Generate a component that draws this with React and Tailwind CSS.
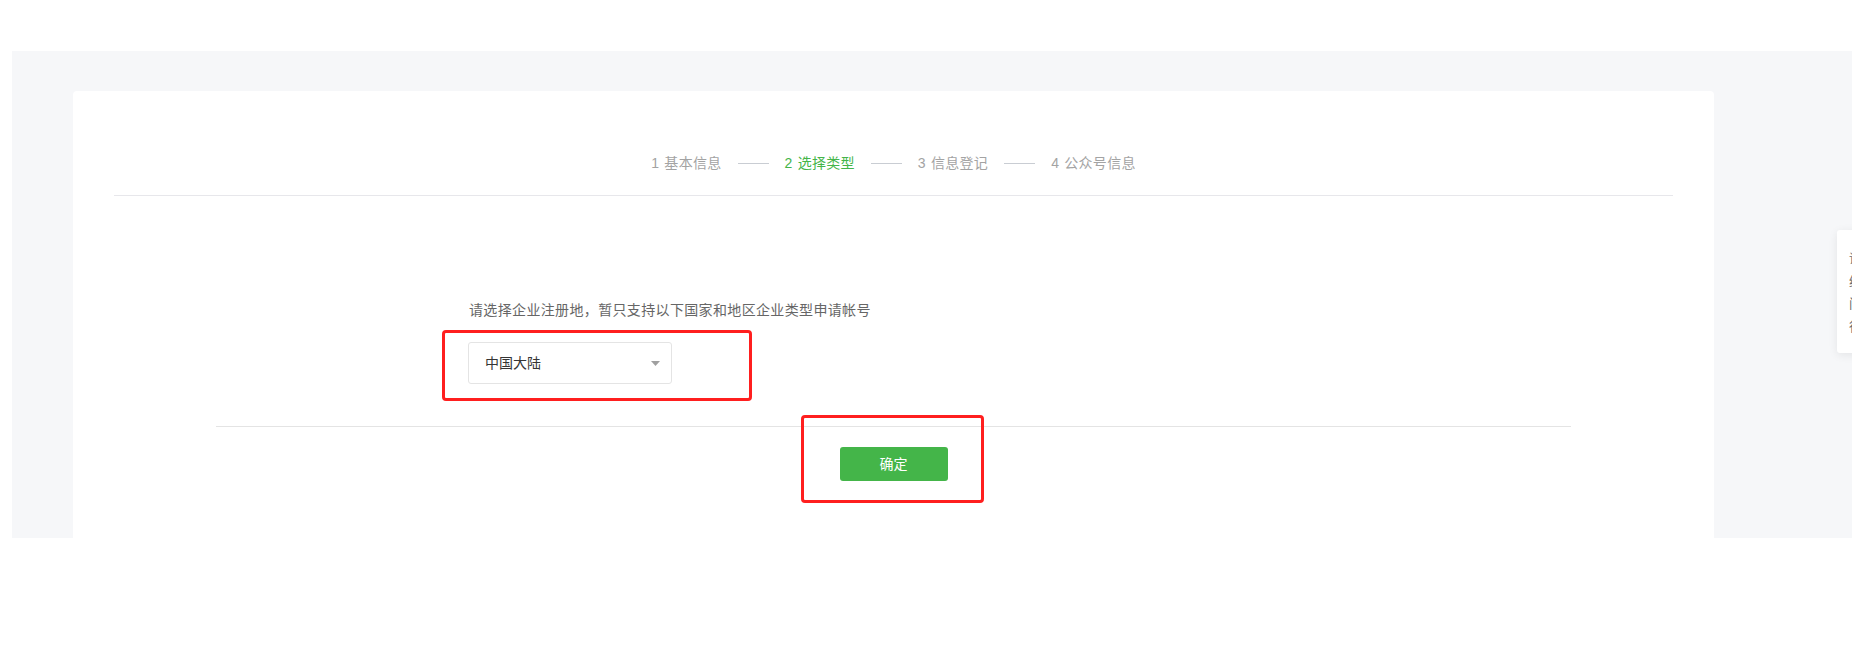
import React from 'react';

const steps = [
  { n: 1, label: '基本信息' },
  { n: 2, label: '选择类型', active: true },
  { n: 3, label: '信息登记' },
  { n: 4, label: '公众号信息' },
];

const font = { fontFamily: '"Liberation Sans", "Noto Sans CJK SC", sans-serif' };

const StepBar = () => (
  <div className="flex items-center justify-center pt-[62px] pb-[22px] border-b border-[#e7e7eb] text-[14px] leading-[20px] tracking-[0.3px]">
    {steps.map((s, i) => (
      <React.Fragment key={s.n}>
        {i > 0 && <span className="mx-[16px] w-[31px] h-px bg-[#c9cdd3]" />}
        <span className={s.active ? 'text-[#44b549]' : 'text-[#a3a3a3]'}>
          {s.n}<span className="ml-[5px]">{s.label}</span>
        </span>
      </React.Fragment>
    ))}
  </div>
);

const SideTools = () => (
  <div className="absolute left-[1825px] top-[179px] w-[60px] h-[123px] bg-white rounded-[3px] shadow-[0_2px_10px_rgba(0,0,0,0.08)] pl-[12px] pt-[18px] text-[13px] leading-[22.5px] text-[#6a6a6a]">
    <div>话</div>
    <div>络</div>
    <div>问</div>
    <div>待</div>
  </div>
);

export default function App() {
  return (
    <div className="relative min-h-[645px] bg-white pt-[51px] pl-[12px]" style={font}>
      <div className="relative w-[1840px] h-[487px] bg-[#f6f7f9] overflow-hidden pl-[61px] pt-[40px]">
        <div className="w-[1641px] h-[447px] bg-white rounded-t-[4px] px-[41px]">
          <StepBar />

          <div className="mx-[102px] border-b border-[#e4e4e4] pt-[104px] pb-[42px]">
            <div className="ml-[253px] text-[14px] leading-[20px] tracking-[0.35px] text-[#666]">
              请选择企业注册地，暂只支持以下国家和地区企业类型申请帐号
            </div>
            <div className="ml-[252px] mt-[22px] w-[204px] h-[42px] border border-[#e4e4e4] rounded-[3px] flex items-center justify-between pl-[16px] pr-[11px] text-[14px] text-[#353535]">
              <span>中国大陆</span>
              <svg width="9" height="5" viewBox="0 0 9 5">
                <path d="M0 0h9L4.5 5z" fill="#a0a0a0" />
              </svg>
            </div>
          </div>

          <div className="flex justify-center pt-[20px]">
            <button className="w-[108px] h-[34px] rounded-[3px] bg-[#44b549] text-white text-[14px]">
              确定
            </button>
          </div>
        </div>

        <SideTools />
      </div>

      <div className="absolute left-[442px] top-[330px] w-[310px] h-[71px] border-[3px] border-[#ff1f1f] rounded-[4px]" />
      <div className="absolute left-[801px] top-[415px] w-[183px] h-[88px] border-[3px] border-[#ff1f1f] rounded-[4px]" />
    </div>
  );
}
